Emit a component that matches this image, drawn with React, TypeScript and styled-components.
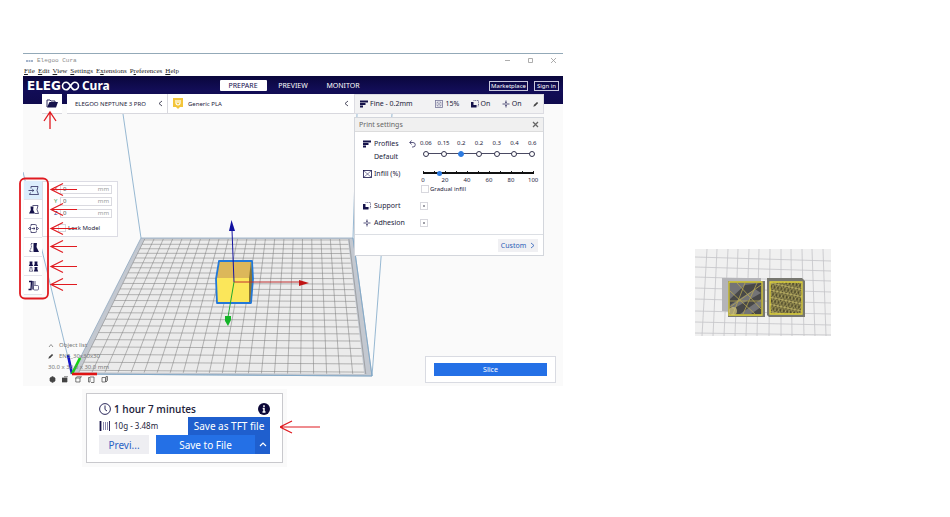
import React from "react";
import styled, { createGlobalStyle, css } from "styled-components";

const Global = createGlobalStyle`
  *, *::before, *::after { box-sizing: border-box; }
  body { margin: 0; background: #fff; color: #22223a; font: 7px/10px "Noto Sans", sans-serif; }
  button, input { font: inherit; color: inherit; margin: 0; padding: 0; border: 0; background: none; }
  svg { display: block; flex-shrink: 0; }
`;

const Page = styled.main`
  display: grid;
  grid-template-columns: minmax(0, 540fr) minmax(0, 387fr);
  padding: 53px 0 50px 23px;
`;
const LeftColumn = styled.div`
  min-width: 0;
`;
const AppWindow = styled.section`
  border-top: 1px solid #93a9b8;
  background: #fafafa;
`;

const TitleBar = styled.div`
  display: flex;
  align-items: center;
  gap: 4px;
  height: 13px;
  padding: 0 6px 0 3px;
  background: #fff;
  color: #8b8b8b;
  font: 6px/12px "Liberation Mono", monospace;
`;
const TitleText = styled.span`
  flex: 1;
`;
const WindowButtons = styled.div`
  display: flex;
  gap: 16px;
`;
const WindowButton = styled.button`
  display: grid;
  place-items: center;
  width: 7px;
  height: 12px;
  color: #999;
`;
const MenuBar = styled.nav`
  display: flex;
  gap: 3px;
  height: 9px;
  padding: 0 1px;
  background: #fff;
  color: #222;
  font: 7px/9px "Liberation Serif", serif;
`;
const MenuItem = styled.button`
  white-space: nowrap;
`;

const Header = styled.header`
  display: grid;
  grid-template-columns: 1fr auto 1fr;
  align-items: center;
  height: 28px;
  padding: 0 4px 9px;
  background: linear-gradient(#0a063c, #120d57 50%, #0f0a4d);
  color: #fff;
`;
const Logo = styled.div`
  display: flex;
  align-items: center;
  font: bold 12px/14px "Noto Sans", sans-serif;
`;
const LogoWide = styled.span`
  font: bold 12px/14px "DejaVu Sans", sans-serif;
`;
const LogoTail = styled.span`
  margin-left: 2px;
`;
const Tabs = styled.nav`
  display: flex;
  gap: 3px;
`;
const Tab = styled.button<{ $active?: boolean }>`
  width: 47px;
  height: 11px;
  border-radius: 1px;
  line-height: 11px;
  ${(p) => p.$active && css`background: #fff; color: #0f0a4d;`}
`;
const Account = styled.div`
  display: flex;
  justify-content: flex-end;
  gap: 6px;
`;
const OutlineButton = styled.button`
  height: 10px;
  padding: 0 1px;
  border: 1px solid #c9c8dc;
  font-size: 6px;
  line-height: 8px;
  min-width: 25px;
`;

const ConfigBar = styled.div`
  position: relative;
  z-index: 1;
  display: grid;
  grid-template-columns: 20px 105px minmax(0, 1fr) 190px;
  height: 20px;
  margin: -10px 19px 0;
`;
const cell = css`
  display: flex;
  align-items: center;
  background: #fff;
  border-bottom: 1px solid #d8d8de;
`;
const OpenButton = styled.button`
  ${cell}
  justify-content: center;
`;
const SelectorButton = styled.button`
  ${cell}
  justify-content: space-between;
  margin-left: 5px;
  padding: 0 4px 0 8px;
  font-size: 6px;
  white-space: nowrap;
`;
const MaterialButton = styled.button`
  ${cell}
  gap: 5px;
  padding: 0 5px;
  border-left: 1px solid #d8d8de;
  font-size: 6px;
  & > span { flex: 1; text-align: left; }
`;
const SummaryButton = styled.button`
  ${cell}
  justify-content: space-between;
  padding: 0 4px 0 5px;
  background: #f2f2f3;
  border: 1px solid #dcdce2;
`;
const SummaryItem = styled.span<{ $wide?: boolean }>`
  display: flex;
  align-items: center;
  gap: 2px;
  white-space: nowrap;
  ${(p) => p.$wide && css`width: 64px;`}
`;

const Stage = styled.div`
  position: relative;
  display: flex;
  justify-content: space-between;
  min-height: 272px;
`;
const SceneLayer = styled.svg`
  position: absolute;
  top: 0;
  left: 0;
  width: 540px;
  height: 272px;
`;
const MarkLayer = styled(SceneLayer)`
  z-index: 2;
  overflow: visible;
  pointer-events: none;
`;
const LeftTools = styled.div`
  position: relative;
  display: flex;
  flex-direction: column;
  justify-content: space-between;
  padding: 67px 0 1px 1px;
`;
const ToolRow = styled.div`
  display: flex;
  align-items: flex-start;
`;
const ToolPalette = styled.div`
  display: flex;
  flex-direction: column;
  width: 18px;
  background: #fff;
`;
const ToolButton = styled.button<{ $active?: boolean }>`
  display: grid;
  place-items: center;
  height: 19px;
  border-bottom: 1px solid #e3e3ea;
  background: ${(p) => (p.$active ? "#dcedfc" : "#fff")};
`;
const MovePanel = styled.form`
  display: grid;
  gap: 3px;
  width: 76px;
  padding: 3px 5px 2px 11px;
  background: #fff;
  border: 1px solid #dcdce4;
`;
const AxisRow = styled.label<{ $color: string }>`
  display: grid;
  grid-template-columns: 6px 1fr;
  align-items: center;
  font-size: 6px;
  line-height: 9px;
  color: ${(p) => p.$color};
`;
const AxisField = styled.span`
  display: flex;
  height: 9px;
  padding: 0 2px;
  border: 1px solid #dadae0;
  line-height: 7px;
  color: #999;
  & input { width: 100%; min-width: 0; color: #555; height: 7px; }
`;
const LockRow = styled.label`
  display: flex;
  align-items: center;
  gap: 2px;
  height: 13px;
  padding-left: 4px;
  font-size: 6px;
  white-space: nowrap;
`;
const ObjectInfo = styled.div`
  display: grid;
  gap: 1px;
  padding-left: 24px;
  color: #777;
  font-size: 6px;
  white-space: nowrap;
`;
const InfoLine = styled.div`
  display: flex;
  align-items: center;
  gap: 5px;
  height: 10px;
`;
const ViewIcons = styled.div`
  display: flex;
  gap: 6px;
  padding-left: 1px;
  height: 12px;
  align-items: center;
`;
const ViewButton = styled.button`
  width: 7px;
  height: 7px;
`;

const RightTools = styled.div`
  position: relative;
  display: flex;
  flex-direction: column;
  justify-content: space-between;
  align-items: flex-end;
  padding: 3px 7px 3px 0;
`;
const SettingsPanel = styled.section`
  width: 190px;
  margin-right: 12px;
  background: #fff;
  border: 1px solid #d3d6dc;
`;
const PanelHeader = styled.div`
  display: flex;
  align-items: center;
  justify-content: space-between;
  height: 14px;
  padding: 0 4px;
  background: #f0f0f0;
  border-bottom: 1px solid #dcdcdc;
  color: #666;
`;
const PanelBody = styled.div`
  display: grid;
  gap: 7px;
  padding: 7px 2px 6px 8px;
`;
const SettingRow = styled.div`
  display: grid;
  grid-template-columns: 11px 35px minmax(0, 1fr);
  align-items: start;
  white-space: nowrap;
`;
const IconSlot = styled.span`
  display: grid;
  place-items: center start;
  height: 10px;
`;
const ProfileLabel = styled.div`
  display: grid;
  gap: 3px;
`;
const ProfileControl = styled.div`
  display: grid;
  grid-template-columns: 8px minmax(0, 1fr);
`;
const ProfileOptions = styled.div`
  display: grid;
  grid-template-columns: repeat(7, 1fr);
  background: linear-gradient(#4a4a63, #4a4a63) 50% 14px / 107px 1px no-repeat;
`;
const ProfileOption = styled.label`
  display: grid;
  align-content: start;
  justify-items: center;
  gap: 3px;
  font-size: 6px;
  line-height: 9px;
`;
const ProfileRadio = styled.input`
  appearance: none;
  width: 6px;
  height: 6px;
  border: 1px solid #33334d;
  border-radius: 50%;
  background: #fff;
  &:checked { background: #2e7be0; border-color: #2e7be0; }
`;
const InfillControl = styled.div`
  padding: 1px 0 0 12px;
`;
const InfillRange = styled.input`
  appearance: none;
  display: block;
  width: 114px;
  height: 6px;
  background:
    repeating-linear-gradient(90deg, #222 0 1px, transparent 1px 11px) 2px 1px / 111px 1px no-repeat,
    linear-gradient(#111, #111) 2px 2px / 111px 2px no-repeat;
  &::-webkit-slider-thumb {
    appearance: none;
    width: 5px;
    height: 5px;
    border-radius: 50%;
    background: #2e7be0;
  }
`;
const InfillScale = styled.div`
  display: flex;
  justify-content: space-between;
  width: 120px;
  margin-left: -3px;
  font-size: 6px;
  line-height: 8px;
`;
const ScaleMark = styled.span`
  width: 10px;
  text-align: center;
`;
const CheckLabel = styled.label`
  display: flex;
  align-items: center;
  gap: 1px;
  font-size: 6px;
`;
const CheckBox = styled.input`
  appearance: none;
  display: grid;
  place-items: center;
  width: 8px;
  height: 8px;
  border: 1px solid #d8d8de;
  background: #fff;
  &:checked::after { content: ""; width: 2px; height: 2px; background: #a0a0a8; }
`;
const SwitchCell = styled.span`
  padding: 1px 0 0 11px;
`;
const PanelFooter = styled.div`
  display: flex;
  justify-content: flex-end;
  padding: 4px 5px 3px;
  border-top: 1px solid #dcdfe4;
`;
const CustomButton = styled.button`
  display: flex;
  align-items: center;
  justify-content: center;
  gap: 4px;
  width: 40px;
  height: 13px;
  background: #f0f0f3;
  color: #2a5db8;
`;
const SliceCard = styled.div`
  width: 131px;
  padding: 6px 8px;
  background: #fff;
  border: 1px solid #d9dbe2;
`;
const SliceButton = styled.button`
  display: block;
  width: 100%;
  height: 13px;
  background: #2470e6;
  color: #fff;
`;

const OutputRow = styled.div`
  display: flex;
  align-items: center;
  padding: 3px 0 0 59px;
`;
const OutputFrame = styled.div`
  padding: 4px;
  background: #fafafa;
`;
const OutputCard = styled.section`
  display: grid;
  grid-template-columns: 50px 114px;
  justify-content: space-between;
  width: 197px;
  padding: 6px 12px 8px;
  background: #fff;
  border: 1px solid #c9c9cd;
  font-size: 10px;
  line-height: 14px;
`;
const OutputHead = styled.div`
  grid-column: 1 / -1;
  display: flex;
  align-items: center;
  gap: 3px;
  height: 17px;
  font-family: "Open Sans", "Noto Sans", sans-serif;
  & > strong { flex: 1; font-weight: 600; }
`;
const Usage = styled.div`
  display: flex;
  align-items: center;
  gap: 3px;
  height: 18px;
  font-size: 8px;
  white-space: nowrap;
`;
const TftButton = styled.button`
  justify-self: end;
  width: 82px;
  height: 18px;
  background: #1f5fce;
  color: #fff;
`;
const PreviewButton = styled.button`
  height: 19px;
  background: #eeeef2;
  color: #2a62c4;
`;
const SaveGroup = styled.div`
  display: grid;
  grid-template-columns: 1fr 15px;
  height: 19px;
  color: #fff;
`;
const SaveButton = styled.button`
  background: #2470e6;
`;
const MoreButton = styled.button`
  display: grid;
  place-items: center;
  background: #1f5fce;
`;
const OutputArrow = styled.svg`
  margin-left: -7px;
`;
const Photo = styled.figure`
  margin: 196px 0 0 132px;
`;

type P = { x: number; y: number };
const quad: P[] = [{ x: 118, y: 124 }, { x: 330, y: 124 }, { x: 349, y: 262 }, { x: 49, y: 260 }];
const mix = (a: P, b: P, t: number): P => ({ x: a.x + (b.x - a.x) * t, y: a.y + (b.y - a.y) * t });
const far = 1 / 214;
const near = 1 / 300;
const depth = (t: number) => (near * t) / (far * (1 - t) + near * t);
const at = (u: number, v: number): P => {
  const k = depth(v);
  return mix(mix(quad[0], quad[3], k), mix(quad[1], quad[2], k), u);
};
const line = (a: P, b: P) => `M${a.x} ${a.y}L${b.x} ${b.y}`;
const gridPath = (() => {
  const parts: string[] = [];
  for (let i = 0; i <= 22; i++) {
    const s = 0.02 + (i / 22) * 0.96;
    parts.push(line(at(s, 0.01), at(s, 0.99)));
    parts.push(line(at(0.02, s), at(0.975, s)));
  }
  return parts.join("");
})();
const poly = (pts: P[]) => pts.map((p) => `${p.x},${p.y}`).join(" ");

function Scene() {
  return (
    <SceneLayer viewBox="0 0 540 272" aria-hidden="true">
      <polygon points={poly(quad)} fill="#c3c8d0" stroke="#8fa8c0" strokeWidth=".8" />
      <polygon points={poly([at(0.02, 0.01), at(0.975, 0.01), at(0.975, 0.99), at(0.02, 0.99)])} fill="#ebebeb" />
      <path d={gridPath} stroke="#808080" strokeWidth=".55" fill="none" />
      <path d="M100 0L118 124M334 0L330 124L349 262M369 0L349 262M49 260L0 58M49 260L349 262" stroke="#7da7c8" strokeWidth=".8" fill="none" />
      <path d="M49 260L45 241" stroke="#1414c8" strokeWidth="2.6" />
      <path d="M49 260L57 244" stroke="#14d214" strokeWidth="2.6" />
      <path d="M49 260H74" stroke="#e01414" strokeWidth="2.6" />
      <polygon points="196,147 229,147 230,165 228,189 194,189 193,165" fill="#fbe65a" />
      <polygon points="196,147 228,147 228,164 193,164" fill="#dcb75a" />
      <polygon points="228,147 230,165 228,189 226,189 226,164" fill="#8a7630" />
      <polygon points="196,147 229,147 230,165 228,189 194,189 193,165" fill="none" stroke="#2378d8" strokeWidth="1.8" strokeLinejoin="round" />
      <path d="M211 168L209 116" stroke="#1414a0" />
      <polygon points="208.5,106 212,117 206,117" fill="#1010a0" />
      <path d="M211 168H277" stroke="#c03030" />
      <polygon points="286,169 276,166 276,172" fill="#c01414" />
      <path d="M211 168L205 203" stroke="#20a830" />
      <polygon points="202,202 208,202 208,206 205,212 202,207" fill="#14b428" />
    </SceneLayer>
  );
}

const leftArrow = (x: number, y: number, tail: number) => `M${x + tail} ${y}H${x}M${x + 12} ${y - 6}L${x} ${y}L${x + 12} ${y + 6}`;

function Marks() {
  return (
    <MarkLayer viewBox="0 0 540 272" aria-hidden="true">
      <g fill="none" stroke="#e01a20">
        <rect x="-3" y="64.500" width="28" height="120" rx="5" strokeWidth="1.8" />
        <path d={[75.5, 95.5, 114.5, 132.500, 152.500, 170.5].map((y) => leftArrow(28, y, 26)).join("")} strokeWidth="1.2" />
        <path d="M27 15V-2M21 7L27 -2L33 7" strokeWidth="1.3" />
      </g>
    </MarkLayer>
  );
}

const ink = "#15124a";

function LayersIcon() {
  return (
    <svg width="8" height="8" viewBox="0 0 8 8">
      <path d="M0 1.500H8M0 4H5.500M0 6.500H3" stroke={ink} strokeWidth="1.9" />
    </svg>
  );
}
function SupportIcon() {
  return (
    <svg width="8" height="8" viewBox="0 0 8 8">
      <path d="M0 2H2.500V5H5.500V7.500H0Z" fill={ink} />
      <path d="M2.500 .5H7.500V6H5.500" fill="none" stroke={ink} strokeWidth=".6" strokeDasharray="1 .7" />
    </svg>
  );
}
function AdhesionIcon() {
  return (
    <svg width="8" height="8" viewBox="0 0 8 8">
      <path d="M.5 4H7.500M4 .5V2.800M4 5.200V7.500M3.200 2L4 2.800L4.800 2M3.200 6L4 5.200L4.800 6" fill="none" stroke={ink} strokeWidth=".7" />
    </svg>
  );
}
function InfillIcon({ framed }: { framed?: boolean }) {
  return framed ? (
    <svg width="9" height="8" viewBox="0 0 9 8">
      <rect x=".5" y=".5" width="8" height="7" fill="none" stroke={ink} strokeWidth=".8" />
      <path d="M.5 .5L8.500 7.500M8.500 .5L.5 7.500" stroke={ink} strokeWidth=".5" />
    </svg>
  ) : (
    <svg width="8" height="8" viewBox="0 0 8 8">
      <rect x=".5" y=".5" width="7" height="7" fill="none" stroke="#77779a" strokeWidth=".8" />
      <path d="M2 2H6V6H2ZM2 2L6 6M6 2L2 6" fill="none" stroke="#77779a" strokeWidth=".5" />
    </svg>
  );
}
function Chevron({ d = "M4 1L1 3.5L4 6", w = 5, h = 7, weight = 0.8 }: { d?: string; w?: number; h?: number; weight?: number }) {
  return (
    <svg width={w} height={h} viewBox={`0 0 ${w} ${h}`}>
      <path d={d} fill="none" stroke="currentColor" strokeWidth={weight} />
    </svg>
  );
}
function PencilIcon() {
  return (
    <svg width="6" height="6" viewBox="0 0 6 6">
      <path d="M.3 5.7L1 3.7L4 .9L5.2 2L2.3 5Z" fill="#444" />
    </svg>
  );
}

const tools = [
  { name: "Move", art: <path d="M3 3.500V1.500H10L9 5.500L10.500 9.500H1.500L2.500 7.500M.5 5.500H5.500M4.300 4.200L5.800 5.500L4.300 6.800" /> },
  { name: "Scale", art: <><path d="M4.500 1.500H10L9 5.500L10.500 9.500H7" /><path d="M2.500 2.500H5.500L5.200 6L7 9.500H1L2.800 6Z" fill={ink} stroke="none" /></> },
  { name: "Rotate", art: <path d="M3 3V1.500H7L9 2.500M3 8V9.500H7L9 8.500M.5 5.500L2.500 3.800V7.200ZM10.500 5.500L8.500 3.800V7.200ZM3.500 5.500H7M5.700 4.500L7 5.500L5.700 6.500" /> },
  { name: "Mirror", art: <><path d="M4.500 1.500H3L3.500 5L1.500 9.500H4.500" strokeDasharray="1.500 .6" /><path d="M5.500 1H9L8.500 5L11 10H5.500Z" fill={ink} stroke="none" /></> },
  { name: "Per model settings", art: <><path d="M1.500 .5H4.500L4.300 3L5.200 5H.8L1.700 3ZM6.500 .5H9.500L9.300 3L10.200 5H5.800L6.700 3ZM6.500 6H9.500L9.300 8L10.200 10.500H5.800L6.700 8Z" fill={ink} stroke="none" /><path d="M2 6.300H4L3.900 8L4.700 10.200H1.300L2.100 8Z" strokeWidth=".6" /></> },
  { name: "Support blocker", art: <><path d="M1 1.500H3.500L3 9.500H.5M5 1V9.500" strokeWidth="1.300" /><path d="M7 1V5" /><rect x="5.500" y="5.500" width="5" height="4.500" rx="1" fill="#fff" strokeWidth=".6" /></> },
];

const views = [
  "M1 2L3.5 .5L6 2V5L3.5 6.5L1 5Z",
  "M0 2H5V6H0ZM2 .8H6",
  "M.5 2L2 .8H6.500L5 2ZM.8 2V6H5V2",
  "M.5 1.5H2V6H.5ZM2 1H6V6.5H3",
  "M1 1.500H4.500V6H1ZM5 .5H6.5V4.500L5 6Z",
];

export default function App() {
  return (
    <>
      <Global />
      <Page>
        <LeftColumn>
          <AppWindow>
            <TitleBar>
              <svg width="7" height="4" viewBox="0 0 7 4">
                <path d="M0 2H2.5M3 2H4M4.5 2H7" stroke="#4a6a98" strokeWidth="1.2" />
              </svg>
              <TitleText>Elegoo Cura</TitleText>
              <WindowButtons>
                <WindowButton aria-label="Minimize"><Chevron d="M1 3.5H6" w={7} /></WindowButton>
                <WindowButton aria-label="Maximize"><Chevron d="M1.5 1.5H5.5V5.5H1.5Z" w={7} /></WindowButton>
                <WindowButton aria-label="Close"><Chevron d="M1 1L6 6M6 1L1 6" w={7} /></WindowButton>
              </WindowButtons>
            </TitleBar>
            <MenuBar>
              <MenuItem><u>F</u>ile</MenuItem>
              <MenuItem><u>E</u>dit</MenuItem>
              <MenuItem><u>V</u>iew</MenuItem>
              <MenuItem><u>S</u>ettings</MenuItem>
              <MenuItem>E<u>x</u>tensions</MenuItem>
              <MenuItem>P<u>r</u>eferences</MenuItem>
              <MenuItem><u>H</u>elp</MenuItem>
            </MenuBar>
            <Header>
              <Logo>
                <LogoWide>ELEG</LogoWide>
                <svg width="19" height="10" viewBox="0 0 18 10" role="img" aria-label="OO">
                  <path d="M9 5C7.500 2.500 6.500 1.200 4.800 1.200A3.800 3.800 0 0 0 4.800 8.800C6.500 8.800 7.500 7.500 9 5C10.500 2.500 11.500 1.200 13.200 1.200A3.800 3.800 0 0 1 13.200 8.800C11.500 8.800 10.500 7.500 9 5Z" fill="none" stroke="#fff" strokeWidth="1.6" />
                </svg>
                <LogoTail>Cura</LogoTail>
              </Logo>
              <Tabs>
                <Tab $active>PREPARE</Tab>
                <Tab>PREVIEW</Tab>
                <Tab>MONITOR</Tab>
              </Tabs>
              <Account>
                <OutlineButton>Marketplace</OutlineButton>
                <OutlineButton>Sign in</OutlineButton>
              </Account>
            </Header>
            <ConfigBar>
              <OpenButton aria-label="Open file">
                <svg width="12" height="9" viewBox="0 0 12 9">
                  <path d="M1 8V1H4L5 2H9V3" fill="none" stroke={ink} strokeWidth=".9" />
                  <path d="M3.500 3H12L10 8.500H1Z" fill={ink} />
                </svg>
              </OpenButton>
              <SelectorButton>ELEGOO NEPTUNE 3 PRO<Chevron /></SelectorButton>
              <MaterialButton>
                <svg width="10" height="11" viewBox="0 0 10 11">
                  <path d="M0 0H10V9H7L5 11L3 9H0Z" fill="#f3c53a" />
                  <path d="M3 2V5A2 2 0 0 0 7 5V2M5 2V5" fill="none" stroke="#fff" strokeWidth="1.2" />
                </svg>
                <span>Generic PLA</span>
                <Chevron />
              </MaterialButton>
              <SummaryButton>
                <SummaryItem $wide><LayersIcon />Fine - 0.2mm</SummaryItem>
                <SummaryItem><InfillIcon />15%</SummaryItem>
                <SummaryItem><SupportIcon />On</SummaryItem>
                <SummaryItem><AdhesionIcon />On</SummaryItem>
                <PencilIcon />
              </SummaryButton>
            </ConfigBar>
            <Stage>
              <Scene />
              <LeftTools>
                <ToolRow>
                  <ToolPalette>
                    {tools.map((t, i) => (
                      <ToolButton key={t.name} $active={i === 0} aria-label={t.name}>
                        <svg width="11" height="11" viewBox="0 0 11 11" fill="none" stroke={ink} strokeWidth=".7">{t.art}</svg>
                      </ToolButton>
                    ))}
                  </ToolPalette>
                  <MovePanel>
                    {[["X", "#c33"], ["Y", "#3a9a50"], ["Z", "#338"]].map(([axis, color]) => (
                      <AxisRow key={axis} $color={color}>
                        {axis}
                        <AxisField><input defaultValue="0" />mm</AxisField>
                      </AxisRow>
                    ))}
                    <LockRow><CheckBox type="checkbox" />Lock Model</LockRow>
                  </MovePanel>
                </ToolRow>
                <ObjectInfo>
                  <InfoLine><Chevron d="M1 5L3 2.500L5 5" w={6} />Object list</InfoLine>
                  <InfoLine><PencilIcon />EN5_30x30x30</InfoLine>
                  <InfoLine>30.0 x 30.0 x 30.0 mm</InfoLine>
                  <ViewIcons>
                    {views.map((d, i) => (
                      <ViewButton key={d} aria-label={`View ${i + 1}`}>
                        <svg width="7" height="7" viewBox="0 0 7 7"><path d={d} fill={i < 2 ? "#444" : "none"} stroke="#444" strokeWidth=".7" /></svg>
                      </ViewButton>
                    ))}
                  </ViewIcons>
                </ObjectInfo>
              </LeftTools>
              <RightTools>
                <SettingsPanel>
                  <PanelHeader>
                    Print settings
                    <button aria-label="Close settings"><Chevron d="M1 1L6 6M6 1L1 6" w={7} weight={1.3} /></button>
                  </PanelHeader>
                  <PanelBody>
                    <SettingRow>
                      <IconSlot><LayersIcon /></IconSlot>
                      <ProfileLabel><span>Profiles</span><span>Default</span></ProfileLabel>
                      <ProfileControl>
                        <IconSlot>
                          <svg width="7" height="8" viewBox="0 0 7 8">
                            <path d="M2.500 .5L.8 2.500L2.500 4.500M.8 2.500H4A2.200 2.200 0 0 1 4 7H3" fill="none" stroke={ink} strokeWidth=".7" />
                          </svg>
                        </IconSlot>
                        <ProfileOptions>
                          {["0.06", "0.15", "0.2", "0.2", "0.3", "0.4", "0.6"].map((v, i) => (
                            <ProfileOption key={i}>{v}<ProfileRadio type="radio" name="profile" defaultChecked={i === 2} /></ProfileOption>
                          ))}
                        </ProfileOptions>
                      </ProfileControl>
                    </SettingRow>
                    <SettingRow>
                      <IconSlot><InfillIcon framed /></IconSlot>
                      <label htmlFor="infill">Infill (%)</label>
                      <InfillControl>
                        <InfillRange id="infill" type="range" min="0" max="100" defaultValue="15" />
                        <InfillScale>
                          {[0, 20, 40, 60, 80, 100].map((n) => <ScaleMark key={n}>{n}</ScaleMark>)}
                        </InfillScale>
                        <CheckLabel><CheckBox type="checkbox" />Gradual infill</CheckLabel>
                      </InfillControl>
                    </SettingRow>
                    <SettingRow>
                      <IconSlot><SupportIcon /></IconSlot>
                      <label htmlFor="support">Support</label>
                      <SwitchCell><CheckBox id="support" type="checkbox" defaultChecked /></SwitchCell>
                    </SettingRow>
                    <SettingRow>
                      <IconSlot><AdhesionIcon /></IconSlot>
                      <label htmlFor="adhesion">Adhesion</label>
                      <SwitchCell><CheckBox id="adhesion" type="checkbox" defaultChecked /></SwitchCell>
                    </SettingRow>
                  </PanelBody>
                  <PanelFooter>
                    <CustomButton>Custom<Chevron d="M1 1L4 3.500L1 6" /></CustomButton>
                  </PanelFooter>
                </SettingsPanel>
                <SliceCard><SliceButton>Slice</SliceButton></SliceCard>
              </RightTools>
              <Marks />
            </Stage>
          </AppWindow>
          <OutputRow>
            <OutputFrame>
              <OutputCard>
                <OutputHead>
                  <svg width="12" height="12" viewBox="0 0 12 12">
                    <circle cx="6" cy="6" r="5.400" fill="none" stroke={ink} strokeWidth=".9" />
                    <path d="M6 2.500V6.500L8 8" fill="none" stroke={ink} strokeWidth=".9" />
                  </svg>
                  <strong>1 hour 7 minutes</strong>
                  <svg width="12" height="12" viewBox="0 0 12 12" role="img" aria-label="Information">
                    <circle cx="6" cy="6" r="6" fill="#0c0838" />
                    <path d="M6 2.300V4M4.700 5.500H6V9M4.500 9H7.500" fill="none" stroke="#fff" strokeWidth="1.500" />
                  </svg>
                </OutputHead>
                <Usage>
                  <svg width="12" height="10" viewBox="0 0 12 10">
                    <path d="M1.500 0V10" stroke={ink} strokeWidth="1.800" />
                    <path d="M4.500 1V9M6.500 1V9M8.500 1V9" stroke="#8a88b0" />
                    <path d="M10.500 0V10" stroke={ink} strokeWidth=".9" />
                  </svg>
                  10g - 3.48m
                </Usage>
                <TftButton>Save as TFT file</TftButton>
                <PreviewButton>Previ...</PreviewButton>
                <SaveGroup>
                  <SaveButton>Save to File</SaveButton>
                  <MoreButton aria-label="More save options"><Chevron d="M1 5L4 2L7 5" w={8} weight={1.2} /></MoreButton>
                </SaveGroup>
              </OutputCard>
            </OutputFrame>
            <OutputArrow width="40" height="16" viewBox="0 0 40 16" aria-hidden="true">
              <path d="M40 7H0M12 1L0 7L12 13" fill="none" stroke="#e01a20" strokeWidth="1.200" />
            </OutputArrow>
          </OutputRow>
        </LeftColumn>
        <Photo>
          <svg width="136" height="87" viewBox="0 0 136 87" role="img" aria-label="Two infill patterns">
            <defs>
              <pattern id="tri" width="7" height="7" patternUnits="userSpaceOnUse" patternTransform="rotate(12)">
                <rect width="7" height="7" fill="#4f4a2c" />
                <path d="M0 0L3.500 7L7 0M0 3.500H7M3.500 0L0 7M3.500 0L7 7" stroke="#c9bd6c" strokeWidth=".7" fill="none" />
              </pattern>
            </defs>
            <rect width="136" height="87" fill="#f0f0f0" />
            <path
              d="M12 0L7 87M22 0L18 87M33 0L29 87M43 0L40 87M54 0L51 87M64 0L62 87M75 0L74 87M86 0L86 87M96 0L97 87M107 0L109 87M117 0L120 87M128 0L131 87M0 8L136 12M0 18L136 22M0 28L136 32M0 39L136 43M0 50L136 54M0 62L136 65M0 73L136 76M0 84L136 86"
              stroke="#c4c4c8"
              strokeWidth=".8"
            />
            <path d="M27 29H66V65H60L27 62Z" fill="#b4b4b8" />
            <path d="M33 32H70V68H33Z" fill="#77776f" />
            <path d="M34 33H67V66H34Z" fill="#484848" />
            <path d="M35 50L50 36L66 34H35ZM45 65L66 50V58L56 65ZM35 56L60 40L66 44L38 60Z" fill="#747476" />
            <path d="M35 42L60 65M35 58L66 36M42 34L66 60M50 34L38 65M62 34L48 65M35 52H66" stroke="#b5a652" strokeWidth=".8" />
            <path d="M34 33H67V66H34Z" fill="none" stroke="#e0d33a" strokeWidth="1.300" />
            <circle cx="38" cy="62" r="4" fill="#d8cc80" opacity=".7" />
            <path d="M72 29H107L110 32V68H74L72 66Z" fill="#77776f" />
            <path d="M75 33H107V65H75Z" fill="url(#tri)" stroke="#e0d33a" strokeWidth="1.300" />
          </svg>
        </Photo>
      </Page>
    </>
  );
}
